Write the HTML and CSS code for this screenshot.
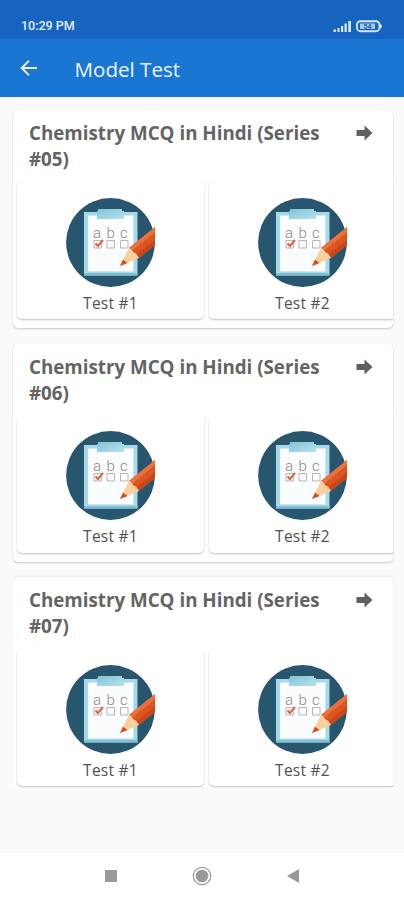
FILE: index.html
```
<!DOCTYPE html>
<html lang="en">
<head>
<meta charset="utf-8">
<title>Model Test</title>
<link rel="stylesheet" href="styles.css">
</head>
<body>
<svg class="defs" width="0" height="0" aria-hidden="true">
  <defs>
    <clipPath id="disc"><path d="M0 0H89V89H0Z"/></clipPath>
    <linearGradient id="clipFill" x1="0" y1="0" x2="1" y2="1">
      <stop offset="0" stop-color="#83c3d8"/><stop offset="1" stop-color="#b4e1ee"/>
    </linearGradient>
    <symbol id="quiz" viewBox="0 0 89 89">
      <g clip-path="url(#disc)">
        <circle cx="44.5" cy="44.5" r="44.4" fill="#28566f"/>
        <path d="M18 14H71.5V77.5H18Z" fill="#a3d9e8"/>
        <path d="M18 75H71.5V77.5H18Z" fill="#7fbfd2"/>
        <path d="M22 17.5H67.5V73.5H22Z" fill="#fbfcfe"/>
        <path d="M32 13V11H56V13H58V21H31V13Z" fill="url(#clipFill)"/>
        <g class="abc"><text x="27" y="40">a</text><text x="40.5" y="40">b</text><text x="54" y="40">c</text></g>
        <g fill="none" stroke="#b9b4b6" stroke-width="1">
          <path d="M28 42.500H35.500V50H28ZM41 42.500H48.500V50H41ZM54.500 42.500H62V50H54.500Z"/>
        </g>
        <path d="M29.500 45.500L32 48L37 42" fill="none" stroke="#e0623c" stroke-width="2"/>
        <path d="M63 50L89 29V47L73 60Z" fill="#dd5420"/>
        <path d="M63 50L89 29V34L66 53Z" fill="#e9723c"/>
        <path d="M70 57L89 41.500V47L73 60Z" fill="#c84718"/>
        <path d="M63 50L66 52L67 54.500L70 55.500L73 60L54 68Z" fill="#f8cf9d"/>
        <path d="M57 61.500L61.500 65L54 68Z" fill="#d64d20"/>
      </g>
    </symbol>
    <symbol id="go" viewBox="0 0 17 16">
      <path d="M.5 5H8.500V.5L16.500 8L8.500 15.500V11H.5Z" fill="#606060"/>
    </symbol>
  </defs>
</svg>
<div class="screen">
  <div class="status">
    <span class="time">10:29 PM</span>
    <svg width="50" height="14" viewBox="0 0 50 14">
      <g fill="#d8e8fa"><path d="M1.500 10.500H4V13H1.500ZM5.500 9H7.500V13H5.500ZM9 7H11.200V13H9ZM12.500 4.500H14.800V13H12.500ZM16.300 2H19V13H16.300Z"/><path d="M47.500 4.500Q50 5.500 50 7.200T47.500 10Z"/></g>
      <rect x="25" y="2.200" width="22.500" height="10" rx="3.500" fill="none" stroke="#d8e8fa" stroke-width="1.900"/>
      <rect x="28" y="4.500" width="15" height="5.500" fill="#a8c9ef"/>
      <text class="level" x="31.500" y="10">54</text>
    </svg>
  </div>
  <header class="bar">
    <svg width="18" height="18" viewBox="0 0 18 18"><path d="M17 9H2M9 1.700L1.700 9L9 16.300" fill="none" stroke="#eef6ff" stroke-width="1.900"/></svg>
    <h1>Model Test</h1>
  </header>
  <main class="list">
    <section class="card">
      <div class="head"><h2>Chemistry MCQ in Hindi (Series #05)</h2><svg class="go"><use href="#go"/></svg></div>
      <div class="tests">
        <div class="test"><svg class="pic"><use href="#quiz"/></svg><span>Test #1</span></div>
        <div class="test"><svg class="pic"><use href="#quiz"/></svg><span>Test #2</span></div>
      </div>
    </section>
    <section class="card">
      <div class="head"><h2>Chemistry MCQ in Hindi (Series #06)</h2><svg class="go"><use href="#go"/></svg></div>
      <div class="tests">
        <div class="test"><svg class="pic"><use href="#quiz"/></svg><span>Test #1</span></div>
        <div class="test"><svg class="pic"><use href="#quiz"/></svg><span>Test #2</span></div>
      </div>
    </section>
    <section class="card last">
      <div class="head"><h2>Chemistry MCQ in Hindi (Series #07)</h2><svg class="go"><use href="#go"/></svg></div>
      <div class="tests">
        <div class="test"><svg class="pic"><use href="#quiz"/></svg><span>Test #1</span></div>
        <div class="test"><svg class="pic"><use href="#quiz"/></svg><span>Test #2</span></div>
      </div>
    </section>
  </main>
  <nav class="nav">
    <svg width="14" height="20" viewBox="0 0 14 20"><path d="M1 4H13V16H1Z" fill="#999"/></svg>
    <svg width="20" height="20" viewBox="0 0 20 20"><circle cx="10" cy="10" r="8.700" fill="none" stroke="#999" stroke-width="1.200"/><circle cx="10" cy="10" r="6.300" fill="#999"/></svg>
    <svg width="14" height="20" viewBox="0 0 14 20"><path d="M13 3V17L1 10Z" fill="#999"/></svg>
  </nav>
</div>
</body>
</html>
```
FILE: styles.css
```
* { box-sizing: border-box; }
body { margin: 0; background: #fafafa; font-family: "Open Sans", "Noto Sans", sans-serif; }
h1, h2 { margin: 0; }
svg { display: block; flex: none; }
.defs { position: absolute; }
.screen { width: 404px; height: 900px; display: flex; flex-direction: column; overflow: hidden; }
.status {
  height: 39px; padding: 12px 22px 0 21px; background: #1764c0; color: #e4effc;
  display: flex; justify-content: space-between; align-items: center;
  font: 500 12.5px Roboto, sans-serif;
}
.status svg { margin-top: 0; }
.level { font: 700 7px Roboto, sans-serif; fill: #1764c0; }
.bar { height: 58px; padding-left: 20px; background: #1976d2; display: flex; align-items: center; gap: 36.5px; }
.bar h1 { padding-top: 1px; font-size: 20.6px; font-weight: 400; color: #eef6ff; line-height: 28px; }
.list { flex: 1; padding: 13px 11px 0 13px; display: flex; flex-direction: column; gap: 15.6px; background: #fafafa; }
.card { height: 218px; border-radius: 5px; background: #fff; box-shadow: 0 1px 2px rgba(0,0,0,.2); overflow: hidden; flex: none; }
.card.last { height: 210.500px; border-radius: 5px 5px 0 0; box-shadow: 0 -1px 2px rgba(0,0,0,.08); }
.head { height: 70px; padding: 10px 20px 0 16px; display: flex; justify-content: space-between; align-items: flex-start; }
.head h2 { width: 305px; font-size: 18.75px; font-weight: 700; line-height: 26px; color: #646464; }
.go { width: 17px; height: 16px; margin-top: 5px; }
.tests { display: flex; gap: 5px; padding: 1px 0 3px 4px; overflow: hidden; }
.test {
  flex: none; width: 187px; height: 138px; padding-top: 16.5px; border-radius: 5px; background: #fff;
  box-shadow: 0 1px 2px rgba(0,0,0,.25); display: flex; flex-direction: column; align-items: center;
}
.pic { width: 89px; height: 89px; }
.test span { margin-top: 4px; font-size: 15.5px; letter-spacing: .25px; line-height: 24px; color: #505050; }
.abc text { font: 300 15px Roboto, sans-serif; fill: #858b94; }
.nav { height: 47px; background: #fff; display: flex; justify-content: space-between; padding: 0 104px 1px; align-items: center; }
```
